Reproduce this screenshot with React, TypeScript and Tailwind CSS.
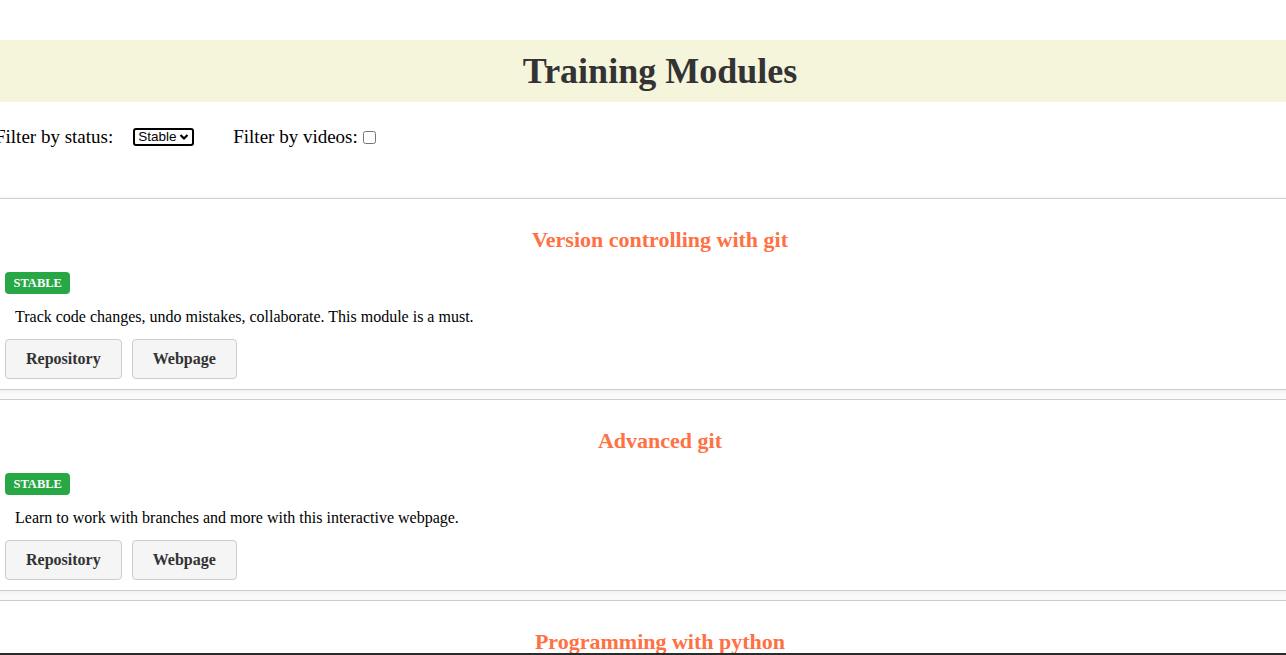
import React from "react";

const modules = [
  {
    title: "Version controlling with git",
    desc: "Track code changes, undo mistakes, collaborate. This module is a must.",
  },
  {
    title: "Advanced git",
    desc: "Learn to work with branches and more with this interactive webpage.",
  },
  {
    title: "Programming with python",
    desc: "Learn the basics of programming with python.",
  },
];

function Card({ title, desc }: { title: string; desc: string }) {
  return (
    <div className="mb-[9px] flex flex-col border-y border-[#cccccc] bg-white px-[20px] pb-[10px] shadow-[0_2px_8px_rgba(0,0,0,0.08)]">
      <h2 className="mt-[28px] text-center text-[22px] font-bold leading-[25px] text-[#ff7043]">
        {title}
      </h2>
      <div className="mt-[20px] flex">
        <span className="flex h-[22px] items-center rounded-[4px] bg-[#28a745] px-[8.5px] text-[12.5px] font-bold text-white">
          STABLE
        </span>
      </div>
      <p className="mt-[14px] ml-[10px] text-[16px] leading-[18px] text-black">{desc}</p>
      <div className="mt-[13px] flex gap-[10px]">
        <button className="h-[40px] rounded-[4px] border border-[#cccccc] bg-[#f5f5f5] px-[20px] text-[16px] font-bold text-[#333333]">
          Repository
        </button>
        <button className="h-[40px] rounded-[4px] border border-[#cccccc] bg-[#f5f5f5] px-[20px] text-[16px] font-bold text-[#333333]">
          Webpage
        </button>
      </div>
    </div>
  );
}

export default function App() {
  return (
    <div
      className="relative h-[655px] w-[1286px] overflow-hidden bg-white"
      style={{ fontFamily: '"Liberation Serif", "Times New Roman", serif' }}
    >
      <div className="ml-[-15px] w-[1350px]">
        <div className="h-[40px]" />
        <div className="flex h-[62px] items-center justify-center bg-[#f5f5dc]">
          <h1 className="text-[36px] font-bold leading-[41px] text-[#333333]">Training Modules</h1>
        </div>
        <div className="mt-[24px] flex h-[22px] items-center pl-[10px] text-[19px] text-black">
          <span>Filter by status:</span>
          <div
            role="combobox"
            className="ml-[20px] flex h-[18px] w-[61px] items-center justify-between rounded-[3px] border-2 border-black bg-white pl-[3px] pr-[3px] text-[13.5px] leading-[14px] text-black"
            style={{ fontFamily: '"Liberation Sans", Arial, sans-serif' }}
          >
            <span>Stable</span>
            <svg width="10" height="8" viewBox="0 0 10 8">
              <path d="M1.5 2 L5 5.5 L8.5 2" fill="none" stroke="black" strokeWidth="2.2" />
            </svg>
          </div>
          <span className="ml-[39px]">Filter by videos:</span>
          <input type="checkbox" className="ml-[5px] h-[13px] w-[13px]" />
        </div>
        <div className="h-[50px]" />
        {modules.map((m) => (
          <Card key={m.title} title={m.title} desc={m.desc} />
        ))}
      </div>
      <div className="absolute bottom-0 left-0 h-[2px] w-full bg-[#2b2b2b]" />
    </div>
  );
}
